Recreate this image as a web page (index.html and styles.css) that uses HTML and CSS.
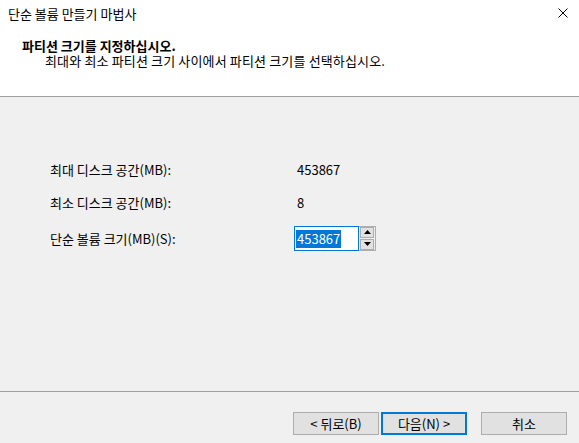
FILE: index.html
```html
<!DOCTYPE html>
<html>
<head>
  <meta charset="UTF-8" />
  <title>단순 볼륨 만들기 마법사</title>
  <link rel="stylesheet" href="styles.css">
</head>
<body>

<div class="wizard">
  <div class="titlebar">
    <span class="title">단순 볼륨 만들기 마법사</span>
    <svg class="close" width="10" height="10" viewBox="0 0 10 10">
      <path d="M0.5 0.5 L9.5 9.5 M9.5 0.5 L0.5 9.5" stroke="#000" stroke-width="1" fill="none" />
    </svg>
  </div>

  <div class="header">
    <div class="head-title">파티션 크기를 지정하십시오.</div>
    <div class="head-sub">최대와 최소 파티션 크기 사이에서 파티션 크기를 선택하십시오.</div>
  </div>

  <div class="content">
    <div class="row">
      <span class="label">최대 디스크 공간(MB):</span>
      <span class="value">453867</span>
    </div>
    <div class="row">
      <span class="label">최소 디스크 공간(MB):</span>
      <span class="value">8</span>
    </div>
    <div class="row row-input">
      <span class="label">단순 볼륨 크기(MB)(S):</span>
      <div class="spin">
        <div class="spin-field"><span class="sel">453867</span></div>
        <div class="spin-btns">
          <div class="spin-btn">
            <svg width="7" height="4" viewBox="0 0 7 4"><path d="M3.5 0 L7 4 L0 4 Z" fill="#000" /></svg>
          </div>
          <div class="spin-btn">
            <svg width="7" height="4" viewBox="0 0 7 4"><path d="M0 0 L7 0 L3.5 4 Z" fill="#000" /></svg>
          </div>
        </div>
      </div>
    </div>
  </div>

  <div class="footer">
    <button class="btn">&lt; 뒤로(B)</button>
    <button class="btn btn-default">다음(N) &gt;</button>
    <button class="btn btn-cancel">취소</button>
  </div>
</div>

</body>
</html>
```

FILE: styles.css
```css
body { margin: 0; font-family: "Noto Sans CJK KR", "Liberation Sans", sans-serif; font-size: 13px; color: #000; background: #f0f0f0; }
.wizard { width: 579px; height: 443px; display: flex; flex-direction: column; }

.titlebar { height: 30px; background: #fff; display: flex; align-items: center; justify-content: space-between; padding: 0 11px 0 8px; }
.title { margin-top: -3px; }
.close { margin-top: -4px; }

.header { height: 67px; background: #fff; border-bottom: 1px solid #a0a0a0; box-sizing: border-box; padding: 8px 0 0 22px; }
.head-title { font-weight: bold; line-height: 15px; }
.head-sub { padding-left: 23px; line-height: 15px; letter-spacing: 0.15px; }

.content { height: 295px; border-bottom: 1px solid #a0a0a0; box-sizing: border-box; padding: 63px 0 0 50px; }
.row { display: flex; align-items: center; height: 18px; margin-bottom: 15px; }
.row-input { height: 26px; margin-top: -1px; }
.label { width: 247px; }

.spin { display: flex; height: 25px; margin-left: -3px; }
.spin-field { width: 65px; height: 25px; box-sizing: border-box; border: 1px solid #0078d7; background: #fff; padding: 2px 0 0 1px; }
.sel { background: #0078d7; color: #fff; line-height: 18px; display: inline-block; padding: 0 1px; }
.spin-btns { display: flex; flex-direction: column; gap: 1px; padding: 0 1px; border: 1px solid #adadad; border-left: none; background: #f0f0f0; box-sizing: border-box; }
.spin-btn { width: 14px; height: 11px; background: #e1e1e1; border: 1px solid #adadad; box-sizing: border-box; display: flex; align-items: center; justify-content: center; }

.footer { flex: 1; display: flex; align-items: flex-start; padding: 20px 0 0 293px; }
.btn { width: 86px; height: 23px; background: #e1e1e1; border: 1px solid #adadad; font-family: inherit; font-size: 13px; padding: 0; margin: 0; color: #000; }
.btn-default { margin-left: 2px; border: 2px solid #0078d7; }
.btn-cancel { margin-left: 14px; }
```
